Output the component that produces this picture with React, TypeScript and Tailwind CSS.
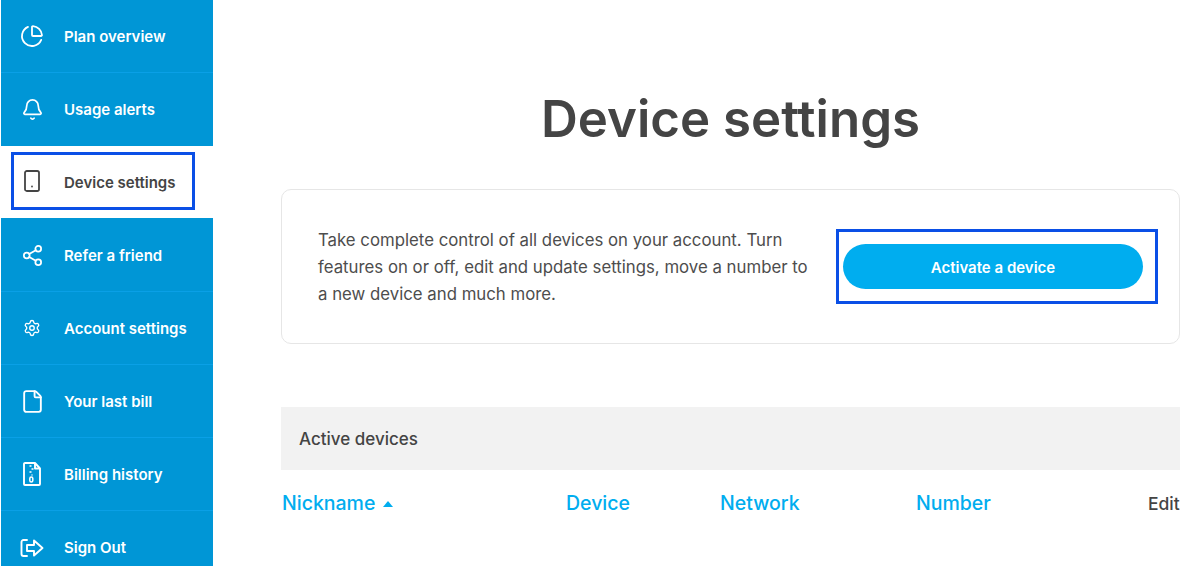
import type { ReactNode } from 'react';
import { Bell, ChartPie, File, Settings, Share2 } from 'lucide-react';

const TabletIcon = () => (
  <svg width="18" height="22" viewBox="0 0 18 22" fill="none" stroke="currentColor" strokeWidth="1.8">
    <rect x="2" y="1" width="14" height="20" rx="1.8" />
    <circle cx="9" cy="16.500" r="0.9" fill="currentColor" stroke="none" />
  </svg>
);

const ZipIcon = () => (
  <svg width="20" height="24" viewBox="0 0 20 24" fill="none" stroke="currentColor" strokeWidth="1.9" strokeLinejoin="round">
    <path d="M2 2a1 1 0 0 1 1-1h10l5 5.500v15.500a1 1 0 0 1-1 1h-14a1 1 0 0 1-1-1z" />
    <path d="M13 1v5.500h5" />
    <path d="M7.500 4h2M9.500 7h2M7.500 10h2M9.500 13h1" strokeWidth="1.500" />
    <rect x="7.800" y="15" width="3" height="5" rx="1.500" strokeWidth="1.500" />
  </svg>
);

const SignOutIcon = () => (
  <svg width="24" height="20" viewBox="0 0 24 20" fill="none" stroke="currentColor" strokeWidth="1.900" strokeLinejoin="round" strokeLinecap="round">
    <path d="M7 2H3.500A2 2 0 0 0 1.500 4v12a2 2 0 0 0 2 2H7" />
    <path d="M7 7h7V2.500l8.500 7.500-8.500 7.500V13H7z" />
  </svg>
);

const NavRow = ({ icon, label, last }: { icon: ReactNode; label: string; last?: boolean }) => (
  <div className={`flex h-[73px] items-center ${last ? '' : 'border-b border-[#0aa0e6]'}`}>
    <div className="flex w-[62px] shrink-0 justify-center">{icon}</div>
    <span className={`ml-px text-[15px] font-semibold ${last ? 'pt-px' : 'pt-[3px]'}`}>{label}</span>
  </div>
);

export default function App() {
  return (
    <div className="flex h-[566px] w-[1181px] overflow-hidden bg-white font-['Inter',sans-serif] text-[#444444]">
      <aside className="ml-px h-[566px] w-[212px] shrink-0 text-white">
        <div className="bg-[#0096d6]">
          <NavRow icon={<ChartPie size={24} strokeWidth={1.800} />} label="Plan overview" />
          <NavRow icon={<Bell size={23} strokeWidth={1.800} />} label="Usage alerts" last />
        </div>
        <div className="h-[72px] bg-white pt-[6px] pl-[10px] text-[#444444]">
          <div className="flex h-[58px] w-[184px] items-center border-[3px] border-[#0a4fe6]">
            <div className="flex w-[36px] shrink-0 justify-center">
              <TabletIcon />
            </div>
            <span className="ml-[14px] pt-[4px] text-[15px] font-semibold">Device settings</span>
          </div>
        </div>
        <div className="bg-[#0096d6] pt-px">
          <NavRow icon={<Share2 size={23} strokeWidth={1.800} />} label="Refer a friend" />
          <NavRow icon={<Settings size={18} strokeWidth={1.800} />} label="Account settings" />
          <NavRow icon={<File size={25} strokeWidth={1.800} />} label="Your last bill" />
          <NavRow icon={<ZipIcon />} label="Billing history" />
          <NavRow icon={<SignOutIcon />} label="Sign Out" last />
        </div>
      </aside>

      <main className="ml-[68px] w-[899px] shrink-0">
        <h1 className="mt-[84px] text-center text-[51px] leading-[70px] font-semibold">Device settings</h1>

        <section className="mt-[35px] flex h-[155px] items-center rounded-[10px] border border-[#e6e6e6] pl-[36px]">
          <p className="w-[500px] shrink-0 pt-[2px] text-[16.800px] leading-[27px] text-[#4d4d4d]">
            Take complete control of all devices on your account. Turn features on or off, edit and update settings, move a number to a new device and much more.
          </p>
          <div className="ml-[18px] border-[3px] border-[#0a4fe6] py-[12px] pr-[12px] pl-[4px]">
            <button className="h-[45px] w-[300px] rounded-full bg-[#00adef] pt-[4px] text-[15px] font-semibold text-white">
              Activate a device
            </button>
          </div>
        </section>

        <div className="mt-[63px] flex h-[63px] items-center bg-[#f2f2f2] pt-[2px] pl-[18px] text-[17px] font-medium">Active devices</div>

        <div className="mt-[19px] grid grid-cols-[285px_154px_196px_231px_auto] items-center text-[19.500px] font-medium text-[#00adef]">
          <div className="flex items-center gap-[8px] pl-px">
            Nickname
            <span className="h-0 w-0 border-x-[5.500px] border-b-[6px] border-x-transparent border-b-[#00adef]" />
          </div>
          <div>Device</div>
          <div>Network</div>
          <div>Number</div>
          <div className="pl-px text-[17.500px] text-[#444444]">Edit</div>
        </div>
      </main>
    </div>
  );
}
